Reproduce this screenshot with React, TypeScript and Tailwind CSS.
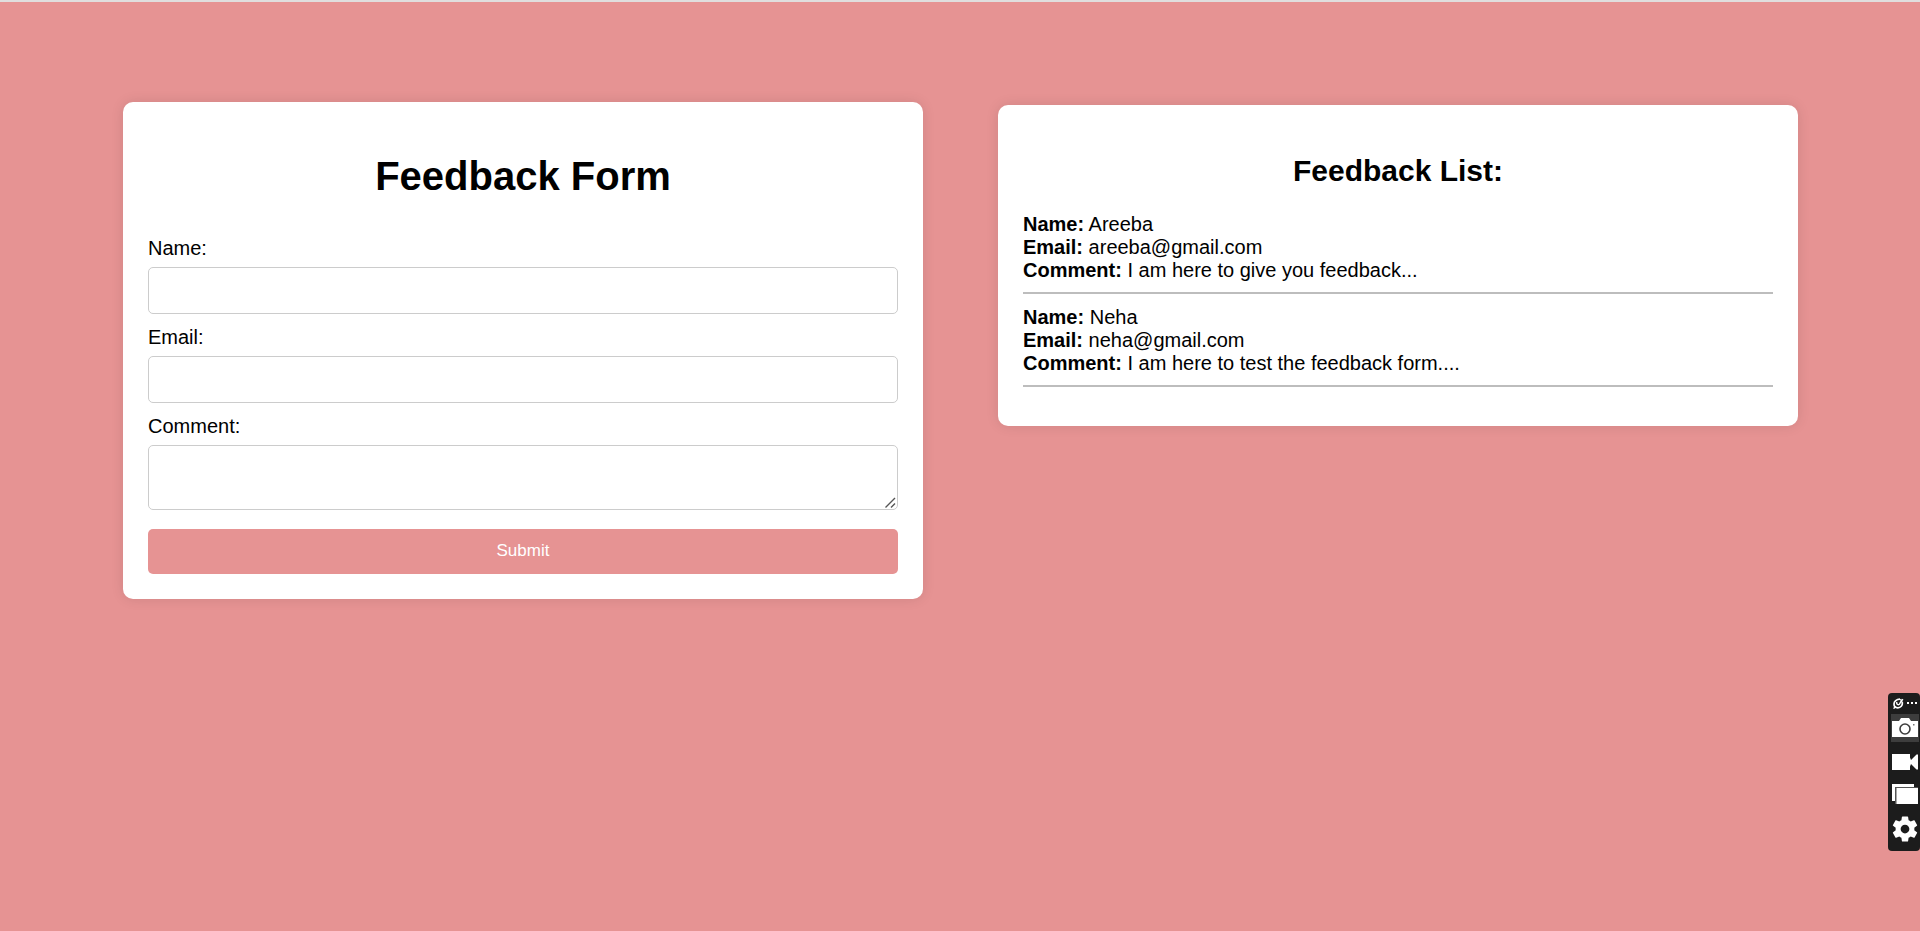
import type { ReactNode } from "react";

type Feedback = { name: string; email: string; comment: string };

const entries: Feedback[] = [
  { name: "Areeba", email: "areeba@gmail.com", comment: "I am here to give you feedback..." },
  { name: "Neha", email: "neha@gmail.com", comment: "I am here to test the feedback form...." },
];

const fieldClass =
  "block w-full rounded-[5px] border border-[#ccc] bg-white px-3 text-[17px] outline-none";

function Card({ children, className = "" }: { children: ReactNode; className?: string }) {
  return (
    <section
      className={`min-w-0 rounded-[10px] bg-white p-[25px] shadow-[0_0_13px_rgba(0,0,0,0.1)] ${className}`}
    >
      {children}
    </section>
  );
}

function Field({ id, label, children }: { id: string; label: string; children: ReactNode }) {
  return (
    <div className="mb-3">
      <label htmlFor={id} className="mb-[7px] block">
        {label}
      </label>
      {children}
    </div>
  );
}

function FeedbackForm() {
  return (
    <Card>
      <h1 className="mt-[26px] mb-[38px] text-center text-[40px] leading-[46px] font-bold">Feedback Form</h1>
      <form onSubmit={(e) => e.preventDefault()}>
        <Field id="name" label="Name:">
          <input id="name" type="text" className={`${fieldClass} h-[47px]`} />
        </Field>
        <Field id="email" label="Email:">
          <input id="email" type="email" className={`${fieldClass} h-[47px]`} />
        </Field>
        <label htmlFor="comment" className="mb-[7px] block">
          Comment:
        </label>
        <div className="relative mb-[19px]">
          <textarea id="comment" className={`${fieldClass} h-[65px] resize-none`} />
          <svg
            className="pointer-events-none absolute right-[2px] bottom-[2px]"
            width="11"
            height="11"
            viewBox="0 0 11 11"
            stroke="#555"
            strokeWidth="1.4"
            aria-hidden="true"
          >
            <path d="M.5 10.500 10 1M6 10.500 10 6.500" />
          </svg>
        </div>
        <button
          type="submit"
          className="block h-[45px] w-full cursor-pointer rounded-[5px] bg-[#e69393] pb-[2px] text-[17px] text-white"
        >
          Submit
        </button>
      </form>
    </Card>
  );
}

function FeedbackList() {
  return (
    <Card className="mt-[3px]">
      <h2 className="mt-6 mb-[25px] text-center text-[30px] leading-[34px] font-bold">Feedback List:</h2>
      <ul className="pb-[2px]">
        {entries.map((f) => (
          <li key={f.email} className="mb-3 border-b-2 border-[#bdbdbd] pb-[10px]">
            <p><strong>Name:</strong> {f.name}</p>
            <p><strong>Email:</strong> {f.email}</p>
            <p><strong>Comment:</strong> {f.comment}</p>
          </li>
        ))}
      </ul>
    </Card>
  );
}

function CaptureToolbar() {
  return (
    <aside
      aria-label="Capture tools"
      className="fixed top-[693px] right-0 flex w-8 flex-col items-center rounded-[4px] bg-[#1c1c1c] pb-2 pl-[2px]"
    >
      <div className="flex h-5 w-full items-center justify-between pr-[2px] pl-[3px]">
        <svg width="11" height="11" viewBox="0 0 11 11" fill="none" stroke="#fff" aria-hidden="true">
          <path d="M7 1.200C3.500 1.200 1 3.200 1 6c0 2.200 1.500 3.800 3.800 3.800C7.700 9.800 9.600 7.500 9.400 4.500" strokeWidth="1.700" />
          <path d="M3.800 4c-.6 3 2.400 3.800 3.200 1.200C7.500 3.500 8.500 2.500 10 1.200M7.500 1.200 9.500 5" strokeWidth="1.400" />
          <path d="M.5 10.500 3 8.500" strokeWidth="1.500" />
        </svg>
        <svg width="12" height="2" viewBox="0 0 12 2" fill="#fff" aria-hidden="true">
          <rect x="1" width="2" height="2" />
          <rect x="5" width="2" height="2" />
          <rect x="9" width="2" height="2" />
        </svg>
      </div>
      <button type="button" aria-label="Screenshot" className="mt-px flex h-7 w-7 items-center justify-center bg-[#3d3d3d]">
        <svg width="26" height="20" viewBox="0 0 26 20" aria-hidden="true">
          <path d="M0 3h7l2-3h8l2 3h7v16H0z" fill="#fff" />
          <circle cx="13" cy="11" r="5" fill="none" stroke="#3d3d3d" strokeWidth="1.600" />
          <rect x="21" y="6" width="1.500" height="1.500" fill="#777" />
        </svg>
      </button>
      <button type="button" aria-label="Record video" className="mt-[11px] flex h-[18px] w-7 items-center justify-center">
        <svg width="26" height="18" viewBox="0 0 26 18" fill="#fff" aria-hidden="true">
          <path d="M0 1h18v3.500l1 2.500 5.500-5.500H26v15h-1.500L19 11l-1 2.500V17H0z" />
        </svg>
      </button>
      <button type="button" aria-label="Gallery" className="mt-3 flex h-[22px] w-7 items-center justify-center">
        <svg width="26" height="22" viewBox="0 0 26 22" aria-hidden="true">
          <path d="M0 1h22v17H0z" fill="#fff" />
          <path d="M3 4h23v17H3z" fill="#555" />
          <path d="M4.500 5H26v16H4.500z" fill="#fff" />
        </svg>
      </button>
      <button type="button" aria-label="Settings" className="mt-[10px] flex h-7 w-7 items-center justify-center">
        <svg className="shrink-0" width="30" height="30" viewBox="0 0 24 24" fill="#fff" aria-hidden="true">
          <path d="M19.430 12.980c.040-.320.070-.640.070-.980s-.030-.660-.070-.980l2.110-1.650c.190-.150.240-.420.120-.640l-2-3.460c-.120-.220-.390-.300-.610-.220l-2.490 1c-.520-.400-1.080-.730-1.690-.980l-.380-2.650A.488.488 0 0 0 14 2h-4c-.250 0-.460.180-.490.420l-.380 2.650c-.610.250-1.170.590-1.690.980l-2.490-1c-.230-.090-.490 0-.610.220l-2 3.460c-.130.220-.070.490.120.640l2.110 1.650c-.040.320-.070.650-.070.980s.030.660.070.980l-2.110 1.650c-.190.150-.240.420-.120.640l2 3.460c.120.220.390.300.610.220l2.490-1c.520.400 1.080.730 1.690.980l.380 2.650c.030.240.240.420.490.420h4c.250 0 .460-.180.490-.420l.380-2.650c.610-.250 1.170-.590 1.690-.980l2.490 1c.230.090.490 0 .610-.220l2-3.460c.120-.220.070-.490-.120-.640l-2.110-1.650zM12 15.500c-1.930 0-3.500-1.570-3.500-3.500s1.570-3.500 3.500-3.500 3.500 1.570 3.500 3.500-1.570 3.500-3.500 3.500z" />
        </svg>
      </button>
    </aside>
  );
}

export default function App() {
  return (
    <div className="min-h-screen border-t-2 border-[#e0dede] bg-[#e69393] font-['Liberation_Sans',Arial,sans-serif] text-[20px] leading-[23px] text-black">
      <main className="grid grid-cols-2 items-start gap-[75px] pt-[100px] pr-[122px] pb-12 pl-[123px]">
        <FeedbackForm />
        <FeedbackList />
      </main>
      <CaptureToolbar />
    </div>
  );
}
